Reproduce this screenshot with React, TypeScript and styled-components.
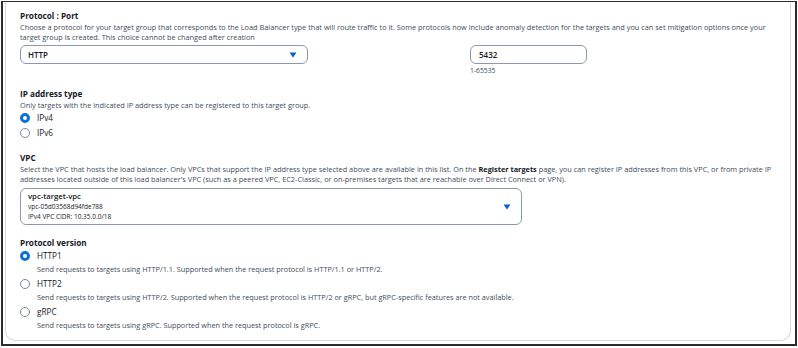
import React from "react";
import styled, { createGlobalStyle } from "styled-components";

const Global = createGlobalStyle`
  html, body { margin: 0; padding: 0; background: #fff; }
  body { font-family: "Open Sans", "Noto Sans", sans-serif; color: #16191f; }
  * { box-sizing: border-box; }
`;

const Frame = styled.div`
  width: 796px;
  height: 345px;
  margin: 1px 0 0 1px;
  border: 2px solid #2b2b2b;
  border-top-width: 1px;
  padding: 0 4px 3px 2px;
  background: #fff;
  overflow: hidden;
`;

const Panel = styled.div`
  height: 100%;
  border: 1px solid #d5d8dc;
  border-top: none;
  border-radius: 0 0 10px 10px;
  padding: 8px 14px 0 14px;
  display: flex;
  flex-direction: column;
`;

const Section = styled.section<{ $gap?: number }>`
  display: flex;
  flex-direction: column;
  margin-bottom: ${(p) => p.$gap ?? 0}px;
`;

const Label = styled.div`
  font-size: 8.2px;
  font-weight: 700;
  line-height: 12px;
  color: #16191f;
`;

const Desc = styled.div`
  font-size: 7.35px;
  line-height: 10px;
  color: #414d5c;
  b { font-weight: 700; color: #16191f; }
`;

const Row = styled.div<{ $top: number }>`
  display: flex;
  align-items: flex-start;
  gap: 162px;
  margin-top: ${(p) => p.$top}px;
`;

const SelectBox = styled.div<{ $w: number; $h: number }>`
  width: ${(p) => p.$w}px;
  height: ${(p) => p.$h}px;
  border: 1px solid #8d99a8;
  border-radius: 6px;
  display: flex;
  align-items: center;
  justify-content: space-between;
  padding: 0 10px 0 7px;
`;

const SelectValue = styled.span`
  font-size: 8px;
  font-weight: 600;
  color: #16191f;
`;

const Caret = () => (
  <svg width="8" height="6" viewBox="0 0 8 6">
    <path d="M0.5 0.5 H7.5 L4 5.5 Z" fill="#0a5ed7" />
  </svg>
);

const PortCol = styled.div`
  display: flex;
  flex-direction: column;
  gap: 2px;
`;

const Input = styled.div`
  width: 117px;
  height: 19px;
  border: 1px solid #8d99a8;
  border-radius: 6px;
  display: flex;
  align-items: center;
  padding-left: 8px;
  font-size: 8px;
  font-weight: 600;
`;

const Hint = styled.div`
  font-size: 6.8px;
  color: #414d5c;
  line-height: 10px;
`;

const RadioGroup = styled.div<{ $gap: number; $top: number }>`
  display: flex;
  flex-direction: column;
  gap: ${(p) => p.$gap}px;
  margin-top: ${(p) => p.$top}px;
`;

const RadioRow = styled.div`
  display: grid;
  grid-template-columns: 10px 1fr;
  column-gap: 7px;
  align-items: center;
`;

const Dot = styled.span<{ $on?: boolean }>`
  width: 10px;
  height: 10px;
  border-radius: 50%;
  border: ${(p) => (p.$on ? "3px solid #0972d3" : "1px solid #7d8998")};
  background: #fff;
`;

const RadioText = styled.span`
  font-size: 8.2px;
  line-height: 14px;
  color: #16191f;
`;

const RadioDesc = styled.span`
  grid-column: 2;
  font-size: 7.3px;
  line-height: 12px;
  color: #414d5c;
`;

const VpcLines = styled.div`
  display: flex;
  flex-direction: column;
`;

const VpcName = styled.span`
  font-size: 7.7px;
  font-weight: 600;
  line-height: 11px;
  color: #16191f;
`;

const VpcSub = styled.span`
  font-size: 6.5px;
  line-height: 10px;
  color: #16191f;
`;

const Radio = ({ on, label, desc }: { on?: boolean; label: string; desc?: string }) => (
  <RadioRow>
    <Dot $on={on} />
    <RadioText>{label}</RadioText>
    {desc && <RadioDesc>{desc}</RadioDesc>}
  </RadioRow>
);

export default function App() {
  return (
    <>
      <Global />
      <Frame>
        <Panel>
          <Section $gap={12}>
            <Label>Protocol : Port</Label>
            <Desc>
              Choose a protocol for your target group that corresponds to the Load Balancer type that will route
              traffic to it. Some protocols now include anomaly detection for the targets and you can set mitigation
              options once your target group is created. This choice cannot be changed after creation
            </Desc>
            <Row $top={3}>
              <SelectBox $w={288} $h={19}>
                <SelectValue>HTTP</SelectValue>
                <Caret />
              </SelectBox>
              <PortCol>
                <Input>5432</Input>
                <Hint>1-65535</Hint>
              </PortCol>
            </Row>
          </Section>

          <Section $gap={12}>
            <Label>IP address type</Label>
            <Desc>Only targets with the indicated IP address type can be registered to this target group.</Desc>
            <RadioGroup $gap={1} $top={1}>
              <Radio on label="IPv4" />
              <Radio label="IPv6" />
            </RadioGroup>
          </Section>

          <Section $gap={12}>
            <Label>VPC</Label>
            <Desc>
              Select the VPC that hosts the load balancer. Only VPCs that support the IP address type selected above
              are available in this list. On the <b>Register targets</b> page, you can register IP addresses from this
              VPC, or from private IP addresses located outside of this load balancer's VPC (such as a peered VPC,
              EC2-Classic, or on-premises targets that are reachable over Direct Connect or VPN).
            </Desc>
            <Row $top={4}>
              <SelectBox $w={502} $h={37}>
                <VpcLines>
                  <VpcName>vpc-target-vpc</VpcName>
                  <VpcSub>vpc-05d03568d94fde788</VpcSub>
                  <VpcSub>IPv4 VPC CIDR: 10.35.0.0/18</VpcSub>
                </VpcLines>
                <Caret />
              </SelectBox>
            </Row>
          </Section>

          <Section>
            <Label>Protocol version</Label>
            <RadioGroup $gap={2} $top={0}>
              <Radio
                on
                label="HTTP1"
                desc="Send requests to targets using HTTP/1.1. Supported when the request protocol is HTTP/1.1 or HTTP/2."
              />
              <Radio
                label="HTTP2"
                desc="Send requests to targets using HTTP/2. Supported when the request protocol is HTTP/2 or gRPC, but gRPC-specific features are not available."
              />
              <Radio
                label="gRPC"
                desc="Send requests to targets using gRPC. Supported when the request protocol is gRPC."
              />
            </RadioGroup>
          </Section>
        </Panel>
      </Frame>
    </>
  );
}
